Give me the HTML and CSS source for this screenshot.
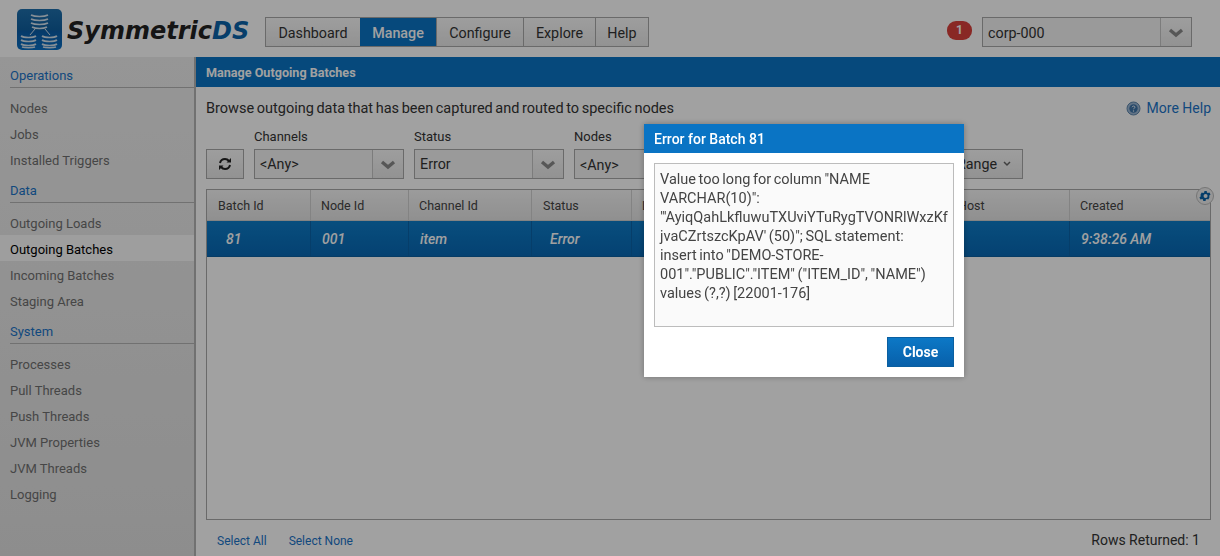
FILE: index.html
```html
<!doctype html>
<html lang="en">
<head>
    <meta charset="utf-8">
    <title>SymmetricDS</title>
    <link rel="stylesheet" href="styles.css">
</head>
<body>
    <header class="top">
        <div class="logo">
            <svg class="logo-icon" width="45" height="41" viewBox="0 0 45 41">
                <defs>
                    <linearGradient id="logoBg" x1="0" y1="0" x2="0" y2="1">
                        <stop offset="0" stop-color="#1f70ad"/>
                        <stop offset=".5" stop-color="#0f5f9f"/>
                        <stop offset=".55" stop-color="#0a5da8"/>
                        <stop offset="1" stop-color="#0a6fc4"/>
                    </linearGradient>
                </defs>
                <rect width="45" height="41" rx="5" fill="url(#logoBg)"/>
                <g fill="none" stroke="#d5e2ee" stroke-width="1.7">
                    <path d="M14 6c4 2 13 2 17 0M14 10c4 2 13 2 17 0M14 14c4 2 13 2 17 0M15 18c4 2 11 2 15 0"/>
                    <path d="M4 27c3 2 12 2 15 0M4 31c3 2 12 2 15 0M4 35c3 2 12 2 15 0M5 38c3 1 10 1 13 0"/>
                    <path d="M25 27c3 2 12 2 15 0M25 31c3 2 12 2 15 0M25 35c3 2 12 2 15 0M26 38c3 1 10 1 13 0"/>
                    <path d="M18 20l-5 6M28 20l5 6" stroke-width="1"/>
                </g>
            </svg>
            <span class="logo-text">Symmetric<span class="logo-ds">DS</span></span>
        </div>
        <nav class="nav">
            <a class="nav-item nav-dashboard">Dashboard</a>
            <a class="nav-item nav-manage active">Manage</a>
            <a class="nav-item nav-configure">Configure</a>
            <a class="nav-item nav-explore">Explore</a>
            <a class="nav-item nav-help">Help</a>
        </nav>
        <div class="top-right">
            <span class="badge">1</span>
            <div class="select select-node">
                <span class="select-value">corp-000</span>
                <span class="select-arrow"><svg width="16" height="10" viewBox="0 0 16 10"><path d="M2 2l6 5 6-5" fill="none" stroke="#8a8a8a" stroke-width="3.4"/></svg></span>
            </div>
        </div>
    </header>

    <div class="layout">
        <aside class="side">
            <h3 class="side-title">Operations</h3>
            <a class="side-item">Nodes</a>
            <a class="side-item">Jobs</a>
            <a class="side-item">Installed Triggers</a>
            <h3 class="side-title">Data</h3>
            <a class="side-item">Outgoing Loads</a>
            <a class="side-item current">Outgoing Batches</a>
            <a class="side-item">Incoming Batches</a>
            <a class="side-item">Staging Area</a>
            <h3 class="side-title">System</h3>
            <a class="side-item">Processes</a>
            <a class="side-item">Pull Threads</a>
            <a class="side-item">Push Threads</a>
            <a class="side-item">JVM Properties</a>
            <a class="side-item">JVM Threads</a>
            <a class="side-item">Logging</a>
        </aside>

        <main class="main">
            <div class="title-bar">Manage Outgoing Batches</div>
            <div class="content">
                <div class="intro">
                    <span>Browse outgoing data that has been captured and routed to specific nodes</span>
                    <a class="more-help">
                        <svg width="15" height="15" viewBox="0 0 15 15">
                            <circle cx="7.5" cy="7.5" r="6.5" fill="#9db8d4" stroke="#5f87ad"/>
                            <circle cx="7.5" cy="7.5" r="4.2" fill="#3f74a8"/>
                            <path d="M6 6.2c.3-1.5 3-1.5 3 0 0 1-1.5 1-1.5 2" fill="none" stroke="#e8f0f8" stroke-width="1"/>
                            <circle cx="7.5" cy="10" r=".7" fill="#e8f0f8"/>
                        </svg>
                        More Help
                    </a>
                </div>

                <div class="filters">
                    <button class="refresh">
                        <svg width="14" height="14" viewBox="0 0 14 14"><g fill="none" stroke="#222" stroke-width="2"><path d="M2 6c.6-2.600 3-4 5-4 1.700 0 3 .8 4 2"/><path d="M12 8c-.6 2.600-3 4-5 4-1.700 0-3-.8-4-2"/></g><path d="M8.500 5.500h4.500V1zM5.500 8.500H1V13z" fill="#222"/></svg>
                    </button>
                    <div class="filter">
                        <label class="filter-label">Channels</label>
                        <div class="select">
                            <span class="select-value">&lt;Any&gt;</span>
                            <span class="select-arrow"><svg width="16" height="10" viewBox="0 0 16 10"><path d="M2 2l6 5 6-5" fill="none" stroke="#8a8a8a" stroke-width="3.4"/></svg></span>
                        </div>
                    </div>
                    <div class="filter">
                        <label class="filter-label">Status</label>
                        <div class="select">
                            <span class="select-value">Error</span>
                            <span class="select-arrow"><svg width="16" height="10" viewBox="0 0 16 10"><path d="M2 2l6 5 6-5" fill="none" stroke="#8a8a8a" stroke-width="3.4"/></svg></span>
                        </div>
                    </div>
                    <div class="filter filter-nodes">
                        <label class="filter-label">Nodes</label>
                        <div class="select">
                            <span class="select-value">&lt;Any&gt;</span>
                            <span class="select-arrow"><svg width="16" height="10" viewBox="0 0 16 10"><path d="M2 2l6 5 6-5" fill="none" stroke="#8a8a8a" stroke-width="3.4"/></svg></span>
                        </div>
                    </div>
                    <button class="range">
                        Time Range
                        <svg width="8" height="6" viewBox="0 0 8 6"><path d="M1 1l3 3 3-3" fill="none" stroke="#666" stroke-width="1.500"/></svg>
                    </button>
                </div>

                <div class="grid">
                    <span class="gear">
                        <svg width="14" height="14" viewBox="0 0 24 24"><path fill="#0a62a8" d="M19.400 13a7.500 7.500 0 0 0 0-2l2.100-1.600-2-3.500-2.500 1a7.500 7.500 0 0 0-1.700-1L15 3.300h-4l-.4 2.600a7.500 7.500 0 0 0-1.700 1l-2.500-1-2 3.500L4.500 11a7.500 7.500 0 0 0 0 2l-2.100 1.600 2 3.500 2.500-1a7.500 7.500 0 0 0 1.700 1l.4 2.600h4l.4-2.600a7.500 7.500 0 0 0 1.700-1l2.500 1 2-3.500zM13 15.500a3.500 3.500 0 1 1 0-7 3.500 3.500 0 0 1 0 7z"/></svg>
                    </span>
                    <div class="grid-row grid-head">
                        <span class="col col-batch">Batch Id</span>
                        <span class="col col-node">Node Id</span>
                        <span class="col col-channel">Channel Id</span>
                        <span class="col col-status">Status</span>
                        <span class="col col-load">Load Id</span>
                        <span class="col col-host">Host</span>
                        <span class="col col-created">Created</span>
                    </div>
                    <div class="grid-row grid-selected">
                        <span class="col col-batch">81</span>
                        <span class="col col-node">001</span>
                        <span class="col col-channel">item</span>
                        <span class="col col-status">Error</span>
                        <span class="col col-load"></span>
                        <span class="col col-host"></span>
                        <span class="col col-created">9:38:26 AM</span>
                    </div>
                </div>

                <div class="grid-foot">
                    <a class="foot-link">Select All</a>
                    <a class="foot-link">Select None</a>
                    <span class="rows">Rows Returned: 1</span>
                </div>
            </div>
        </main>
    </div>

    <div class="shade"></div>

    <div class="modal">
        <div class="modal-title">Error for Batch 81</div>
        <div class="modal-body">
            <div class="modal-text">Value too long for column "NAME VARCHAR(10)": "'AyiqQahLkfluwuTXUviYTuRygTVONRlWxzKfjvaCZrtszcKpAV' (50)"; SQL statement:<br>insert into "DEMO-STORE-<br>001"."PUBLIC"."ITEM" ("ITEM_ID", "NAME")<br>values (?,?) [22001-176]</div>
            <div class="modal-actions">
                <button class="close">Close</button>
            </div>
        </div>
    </div>
</body>
</html>
```

FILE: styles.css
```css
html,
body {
    height: 100%;
}

body {
    margin: 0;
    overflow: hidden;
    font-family: Roboto, "Liberation Sans", sans-serif;
    font-size: 14px;
    color: #333;
    background: #fff;
}

a {
    color: inherit;
}

/* header */

.top {
    height: 57px;
    display: flex;
    align-items: flex-start;
    background: #fff;
}

.logo {
    width: 248px;
    margin: 9px 0 0 17px;
    display: flex;
    align-items: center;
    gap: 5px;
    flex: none;
}

.logo-text {
    font-family: "DejaVu Sans", sans-serif;
    font-size: 24px;
    font-weight: bold;
    font-style: italic;
    padding-top: 2px;
    color: #222;
}

.logo-ds {
    color: #0a62a8;
}

.nav {
    display: flex;
    height: 30px;
    margin-top: 17px;
    border: 1px solid #a8a8a8;
    box-sizing: border-box;
    background: linear-gradient(#fafafa, #e8e8e8);
}

.nav-item {
    box-sizing: border-box;
    display: flex;
    align-items: center;
    justify-content: center;
    border-left: 1px solid #a8a8a8;
    color: #333;
    font-size: 14.300px;
    padding-top: 1px;
}

.nav-item:first-child {
    border-left: 0;
}

.nav-dashboard { width: 94px; }
.nav-manage { width: 76px; }
.nav-configure { width: 87px; }
.nav-explore { width: 72px; }
.nav-help { width: 53px; }

.nav-item.active {
    background: #0a74c4;
    color: #fff;
    font-weight: 500;
    border-left: 0;
}

.top-right {
    margin-left: auto;
    margin-right: 28px;
    margin-top: 17px;
    display: flex;
    align-items: flex-start;
    gap: 10px;
}

.badge {
    margin-top: 4px;
    width: 25px;
    height: 19px;
    border-radius: 9px;
    background: #d9403c;
    color: #fff;
    font-size: 12px;
    font-weight: bold;
    text-align: center;
    line-height: 18px;
}

.select {
    width: 150px;
    height: 30px;
    box-sizing: border-box;
    display: flex;
    border: 1px solid #a8a8a8;
    background: #f4f4f4;
}

.select-node {
    width: 210px;
}

.select-value {
    flex: 1;
    padding-left: 5px;
    line-height: 30px;
    font-size: 14.300px;
    color: #333;
}

.filter .select-value {
    line-height: 28px;
}

.filter-nodes .select-value {
    line-height: 30px;
}

.select-arrow {
    width: 31px;
    padding-top: 2px;
    box-sizing: border-box;
    display: flex;
    align-items: center;
    justify-content: center;
    border-left: 1px solid #c4c4c4;
    background: linear-gradient(#fafafa, #e8e8e8);
}

/* layout */

.layout {
    display: flex;
    height: calc(100% - 57px);
}

.side {
    width: 196px;
    flex: none;
    padding-top: 10px;
    box-sizing: border-box;
    background: linear-gradient(#eeeeee, #e0e0e0);
    border-right: 2px solid #b4b4b4;
}

.side-title {
    margin: 0 0 6px 10px;
    height: 20px;
    font-size: 13px;
    font-weight: 400;
    line-height: 17px;
    color: #1b74c8;
    border-bottom: 1px solid #b4b4b4;
}

.side-item {
    display: block;
    height: 26px;
    padding-left: 10px;
    line-height: 30px;
    font-size: 13px;
    color: #707070;
}

.side-item + .side-title {
    margin-top: 10px;
}

.side-item.current {
    background: #fafafa;
    color: #000;
}

.main {
    flex: 1;
    min-width: 0;
    display: flex;
    flex-direction: column;
}

.title-bar {
    height: 30px;
    padding-left: 10px;
    box-sizing: border-box;
    line-height: 31px;
    font-size: 12.600px;
    font-weight: bold;
    color: #fff;
    background: #0a74c4;
}

.content {
    flex: 1;
    padding: 0 9px 0 10px;
    display: flex;
    flex-direction: column;
}

.intro {
    height: 39px;
    padding-top: 3px;
    box-sizing: border-box;
    display: flex;
    justify-content: space-between;
    align-items: center;
    font-size: 14.500px;
    word-spacing: -1px;
}

.more-help {
    display: flex;
    align-items: center;
    gap: 6px;
    font-size: 14px;
    word-spacing: 0;
    color: #1b74c8;
}

.filters {
    display: flex;
    align-items: flex-end;
    gap: 10px;
    height: 53px;
}

.filter-label {
    display: block;
    height: 23px;
    line-height: 22px;
    font-size: 13px;
}

.refresh {
    width: 38px;
    height: 30px;
    padding: 0;
    border: 1px solid #a8a8a8;
    background: linear-gradient(#fafafa, #e8e8e8);
    display: flex;
    align-items: center;
    justify-content: center;
}

.range {
    width: 139px;
    height: 30px;
    margin-left: 150px;
    padding: 0 11px 0 0;
    border: 1px solid #a8a8a8;
    background: linear-gradient(#fafafa, #e8e8e8);
    font-family: inherit;
    font-size: 14.300px;
    color: #333;
    display: flex;
    align-items: center;
    justify-content: flex-end;
    gap: 6px;
}

.grid {
    position: relative;
    margin-top: 10px;
    height: 331px;
    box-sizing: border-box;
    border: 1px solid #a8a8a8;
    background: #fff;
}

.gear {
    position: absolute;
    right: -4px;
    top: -3px;
    width: 16px;
    height: 16px;
    border-radius: 50%;
    border: 1px solid #bbb;
    background: #eee;
    display: flex;
    align-items: center;
    justify-content: center;
}

.grid-row {
    display: flex;
}

.col {
    box-sizing: border-box;
    flex: none;
    border-left: 1px solid #d0d0d0;
}

.col:first-child {
    border-left: 0;
}

.col-batch { width: 103px; }
.col-node { width: 98px; }
.col-channel { width: 123px; }
.col-status { width: 100px; }
.col-load { width: 316px; }
.col-host { width: 122px; }
.col-created { flex: 1; }

.grid-head {
    height: 31px;
    background: linear-gradient(#f6f6f6, #e4e4e4);
    border-bottom: 1px solid #d0d0d0;
    box-sizing: border-box;
    line-height: 31px;
    font-size: 12.500px;
    color: #444;
}

.grid-head .col {
    padding-left: 10px;
}

.grid-head .col-batch,
.grid-head .col-status {
    padding-left: 11px;
}

.grid-selected {
    height: 36px;
    line-height: 37px;
    background: linear-gradient(#0e7cc8, #0868b4);
    border-bottom: 1px solid #0a5fa0;
    box-sizing: border-box;
    font-style: italic;
    font-weight: 500;
    font-size: 14px;
    color: #fff;
}

.grid-selected .col {
    padding-left: 18px;
    border-left-color: #0a62a8;
}

.grid-selected .col-batch {
    padding-left: 19px;
}

.grid-selected .col-node,
.grid-selected .col-channel,
.grid-selected .col-created {
    padding-left: 11px;
}

.grid-foot {
    flex: 1;
    display: flex;
    align-items: center;
    padding: 4px 11px 0;
    font-size: 12px;
}

.foot-link {
    margin-right: 22px;
    color: #1b74c8;
    padding-top: 2px;
}

.rows {
    margin-left: auto;
    font-size: 14px;
}

/* dialog */

.shade {
    position: fixed;
    inset: 0;
    background: rgba(0, 0, 0, .37);
}

.modal {
    position: fixed;
    left: 644px;
    top: 124px;
    width: 320px;
    height: 253px;
    background: #fff;
    box-shadow: 0 0 6px rgba(0, 0, 0, .3);
}

.modal-title {
    height: 29px;
    padding-left: 10px;
    line-height: 31px;
    background: #0a74c4;
    color: #fff;
    font-size: 14px;
    font-weight: 500;
}

.modal-body {
    padding: 10px;
}

.modal-text {
    height: 164px;
    box-sizing: border-box;
    padding: 6px 5px;
    border: 1px solid #bcbcbc;
    background: #fafafa;
    font-size: 14.500px;
    word-spacing: -1px;
    line-height: 19px;
    color: #444;
    overflow-wrap: break-word;
}

.modal-actions {
    margin-top: 10px;
    display: flex;
    justify-content: flex-end;
}

.close {
    width: 67px;
    height: 30px;
    padding: 0;
    border: 1px solid #0a5fa0;
    background: linear-gradient(#0c78c6, #0860aa);
    font-family: inherit;
    font-size: 14px;
    font-weight: bold;
    color: #fff;
}
```
